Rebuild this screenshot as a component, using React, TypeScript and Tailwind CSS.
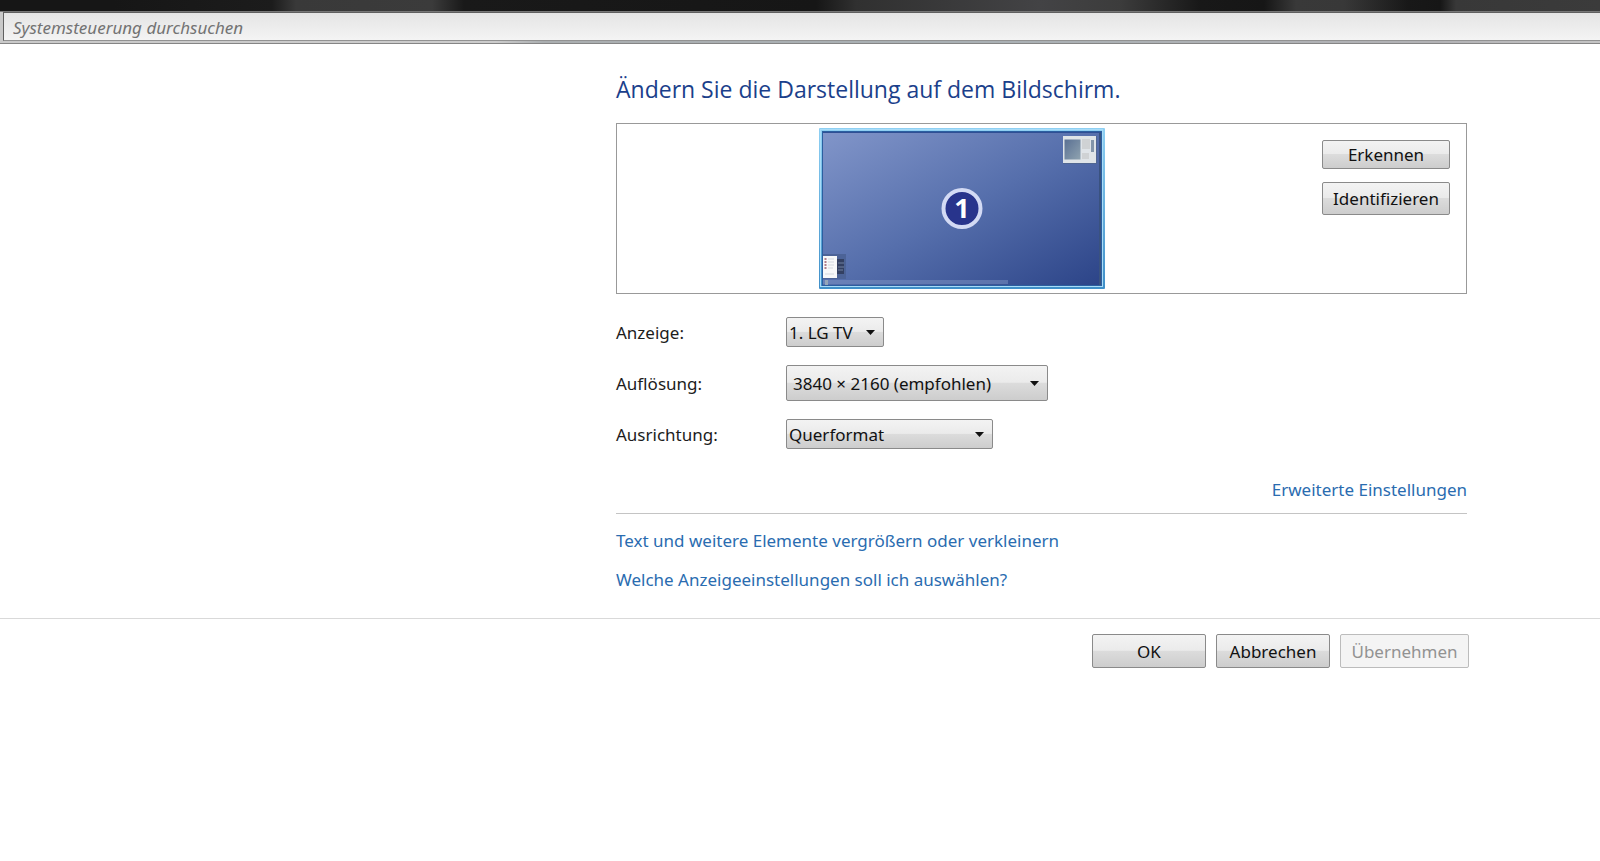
import React, { useState } from "react";

const buttonStyle =
    "rounded-[2px] border border-[#8a8a8a] bg-[linear-gradient(#f3f3f3_0%,#ebebeb_48%,#dcdcdc_50%,#cdcdcd_100%)] text-[17px] leading-6 text-[#111]";

const settings = [
    {
        id: "anzeige",
        label: "Anzeige:",
        options: ["1. LG TV"],
        size: "w-[98px]",
        inner: "h-[30px] pl-[2px] pt-0.5",
    },
    {
        id: "aufloesung",
        label: "Auflösung:",
        options: ["3840 × 2160 (empfohlen)", "1920 × 1080"],
        size: "w-[262px]",
        inner: "h-9 pl-[6px] pt-0.5",
    },
    {
        id: "ausrichtung",
        label: "Ausrichtung:",
        options: ["Querformat", "Hochformat"],
        size: "w-[207px]",
        inner: "h-[30px] pl-[2px] pt-0.5",
    },
];

const SearchBar = () => {
    const [query, setQuery] = useState("");
    return (
        <header className="bg-[linear-gradient(90deg,#161616_0%,#161616_7%,#1c1c1c_17%,#393939_18.5%,#3b3b3b_27%,#191919_29%,#161616_51%,#303030_53.5%,#434345_65%,#3c3c3c_70%,#181818_75%,#161616_79%,#393939_81%,#383838_84%,#181818_88%,#161616_90%,#383838_91%,#3b3b3b_100%)] pt-[11px]">
            <div className="border-y border-t-[#777] border-b-[#858585] bg-[linear-gradient(90deg,#c9c9c9_0%,#cccccc_31%,#aaaeb0_34%,#a9b0b4_60%,#b2b2b5_90%,#c4c4c4_100%)] pb-[2px] pl-[3px]">
                <input
                    type="text"
                    aria-label="Systemsteuerung durchsuchen"
                    placeholder="Systemsteuerung durchsuchen"
                    value={query}
                    onChange={(e) => setQuery(e.target.value)}
                    className="block h-[29px] w-full border-y border-l border-[#606060] border-b-[#929292] bg-[linear-gradient(#e5e5e5,#ececec_50%,#f4f4f4)] pl-[9px] pt-0.5 text-[17px] italic text-[#6b6b6b] outline-none placeholder:text-[#737373]"
                />
            </div>
        </header>
    );
};

const Monitor = () => (
    <svg
        viewBox="0 0 286 161"
        className="h-[161px] w-[286px]"
        role="img"
        aria-label="Bildschirm 1"
    >
        <defs>
            <linearGradient id="desk" x1="0" y1="0" x2="1" y2="1">
                <stop offset="0" stopColor="#8195c9" />
                <stop offset="0.5" stopColor="#566fac" />
                <stop offset="1" stopColor="#2c4488" />
            </linearGradient>
            <linearGradient id="frame" x1="0" y1="0" x2="0" y2="1">
                <stop offset="0" stopColor="#8fd0f3" />
                <stop offset="1" stopColor="#3f8fc8" />
            </linearGradient>
            <linearGradient id="pane" x1="0" y1="0" x2="1" y2="1">
                <stop offset="0" stopColor="#5a7093" />
                <stop offset="1" stopColor="#8fa3b0" />
            </linearGradient>
        </defs>
        <rect width="286" height="161" rx="1" fill="url(#frame)" />
        <rect x="1.5" y="1.5" width="282" height="157" fill="none" stroke="#a9dcf8" />
        <rect x="3" y="3" width="280" height="155" fill="#2b5fa0" />
        <rect x="4" y="5" width="277" height="152" fill="url(#desk)" />
        <path d="M281 4v153" stroke="#3a527f" strokeWidth="2" />
        <path d="M4 4.500h278" stroke="#2f4f94" />

        {/* open window, top right */}
        <rect x="244" y="8" width="34" height="28" fill="#506692" />
        <rect x="244" y="8" width="33" height="27" fill="#dfe4e8" />
        <rect x="245.500" y="11.500" width="16" height="20" fill="url(#pane)" />
        <rect x="263" y="11" width="8" height="10" fill="#cfd2d4" />
        <rect x="263" y="25" width="7" height="6" fill="#cfd2d4" />
        <rect x="272" y="12" width="3" height="12" fill="#8395aa" />

        {/* start menu and taskbar */}
        <rect x="4" y="126" width="23" height="25" fill="#4c6397" />
        <rect x="4" y="128" width="14" height="22" fill="#f7f8f9" />
        <path d="M6.500 130v11" stroke="#b07f8b" strokeWidth="2" strokeDasharray="2 1" />
        <path d="M9 131h6M9 134h6M9 137h6M9 140h5M6 146h9" stroke="#d3d8df" />
        <rect x="18" y="131" width="7" height="15" fill="#334062" />
        <path d="M19 135h6M19 139h6M19 142h5" stroke="#7180a0" />
        <rect x="4" y="152" width="185" height="4" fill="#7d93c4" opacity="0.5" />
        <rect x="6" y="152" width="3" height="5" fill="#95a5b8" />

        <circle cx="143" cy="80.500" r="18.500" fill="#28348c" stroke="#d3daf4" strokeWidth="4" />
        <text
            x="143"
            y="90"
            textAnchor="middle"
            className="fill-white font-['Open_Sans',sans-serif] text-[27px] font-bold"
        >
            1
        </text>
    </svg>
);

const App = () => {
    return (
        <div className="min-h-screen bg-white font-['Noto_Sans','Open_Sans',sans-serif] text-[17px] leading-6 text-[#1c1c1c]">
            <SearchBar />
            <main>
                <section className="pl-[616px] pr-[133px] pt-[29px]">
                    <h1 className="font-['Open_Sans',sans-serif] text-[23px] leading-8 text-[#1b3f8b]">
                        Ändern Sie die Darstellung auf dem Bildschirm.
                    </h1>
                    <div className="mt-[18px] flex justify-between border border-[#999] pb-1 pl-[202px] pr-4 pt-1">
                        <Monitor />
                        <div className="flex w-32 flex-col gap-[13px] pt-3">
                            <button type="button" className={`h-[29px] pt-px ${buttonStyle}`}>
                                Erkennen
                            </button>
                            <button type="button" className={`h-[33px] pt-px ${buttonStyle}`}>
                                Identifizieren
                            </button>
                        </div>
                    </div>

                    <div className="mt-[23px] flex flex-col gap-[18px]">
                        {settings.map((item) => (
                            <div key={item.id} className="flex items-center">
                                <label htmlFor={item.id} className="w-[170px] pt-0.5">
                                    {item.label}
                                </label>
                                <div className={`relative ${item.size}`}>
                                    <select
                                        id={item.id}
                                        className={`block w-full appearance-none ${item.inner} ${buttonStyle}`}
                                    >
                                        {item.options.map((option) => (
                                            <option key={option}>{option}</option>
                                        ))}
                                    </select>
                                    <svg
                                        viewBox="0 0 9 5"
                                        className="pointer-events-none absolute inset-y-0 right-[9px] my-auto h-[5px] w-[9px]"
                                    >
                                        <path d="M0 0h9L4.500 5z" fill="#111" />
                                    </svg>
                                </div>
                            </div>
                        ))}
                    </div>

                    <div className="mt-[29px] flex justify-end border-b border-[#c4c4c4] pb-[11px]">
                        <a href="#erweitert" className="text-[#2a6cb0]">
                            Erweiterte Einstellungen
                        </a>
                    </div>
                    <div className="mt-[15px] flex flex-col items-start gap-[15px] pb-[26px] text-[#2a6cb0]">
                        <a href="#textgroesse">
                            Text und weitere Elemente vergrößern oder verkleinern
                        </a>
                        <a href="#hilfe">
                            Welche Anzeigeeinstellungen soll ich auswählen?
                        </a>
                    </div>
                </section>

                <footer className="flex justify-end gap-[10px] border-t border-[#d9d9d9] pr-[131px] pt-[15px]">
                    <button type="button" className={`h-[34px] w-[114px] pt-px ${buttonStyle}`}>
                        OK
                    </button>
                    <button type="button" className={`h-[34px] w-[114px] pt-px ${buttonStyle}`}>
                        Abbrechen
                    </button>
                    <button
                        type="button"
                        disabled
                        className="h-[34px] w-[129px] rounded-[2px] border border-[#bcbcbc] bg-[#f4f4f4] pt-px text-[17px] leading-6 text-[#929292]"
                    >
                        Übernehmen
                    </button>
                </footer>
            </main>
        </div>
    );
};

export default App;
